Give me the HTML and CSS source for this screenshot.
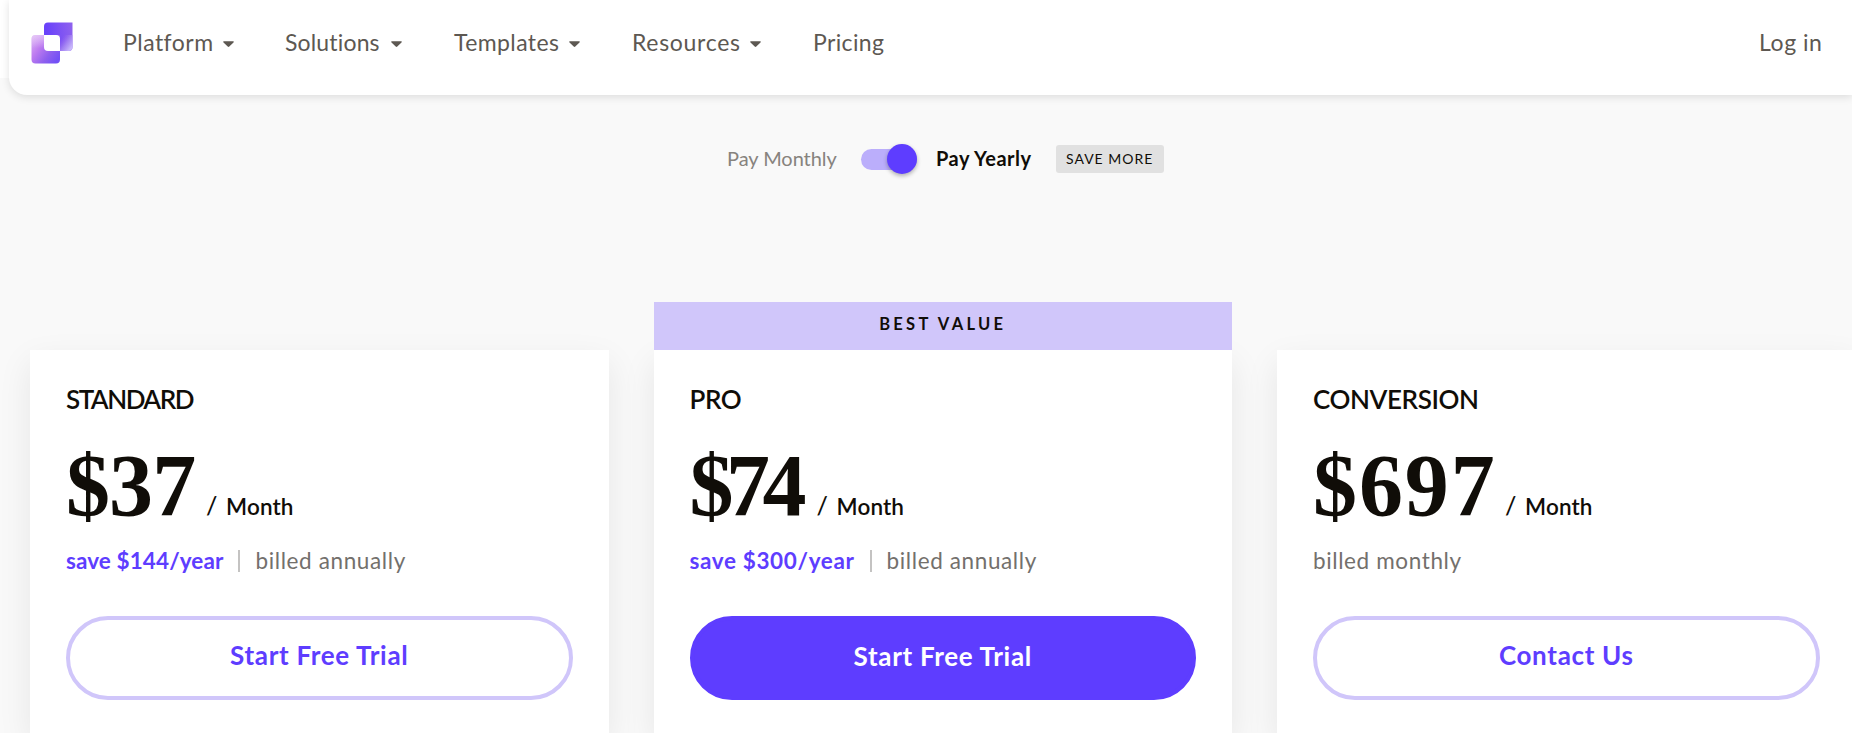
FILE: index.html
```
<!DOCTYPE html>
<html lang="en">
<head>
<meta charset="utf-8">
<title>Pricing</title>
<link rel="stylesheet" href="styles.css">
</head>
<body>
<header class="header">
  <a class="logo" aria-label="Home">
    <svg width="42" height="42" viewBox="0 0 42 42">
      <defs>
        <linearGradient id="top" x1="0" y1="0.2" x2="1" y2="0.1"><stop offset="0.1" stop-color="#6a42fa"/><stop offset="1" stop-color="#8f62ee"/></linearGradient>
        <linearGradient id="fold" x1="0" y1="0.35" x2="0.7" y2="1"><stop offset="0" stop-color="#9a6aee" stop-opacity="0"/><stop offset="0.5" stop-color="#a98af2" stop-opacity=".8"/><stop offset="1" stop-color="#c9b8fb"/></linearGradient>
        <linearGradient id="low" x1="0" y1="0" x2="1" y2="0.75"><stop offset="0" stop-color="#dfb8f6"/><stop offset="0.4" stop-color="#bd7bf0"/><stop offset="0.72" stop-color="#8f60ee"/><stop offset="1" stop-color="#7350f6"/></linearGradient>
        <linearGradient id="glow" x1="0" y1="0" x2="0" y2="1"><stop offset="0" stop-color="#ecd5f8" stop-opacity=".6"/><stop offset="1" stop-color="#ecd5f8" stop-opacity="0"/></linearGradient>
      </defs>
      <path d="M17 0.5H41.5V25a4 4 0 0 1-4 4H13V4.500a4 4 0 0 1 4-4z" fill="url(#top)"/>
      <path d="M29 13H41.500V25a4 4 0 0 1-4 4H29z" fill="url(#fold)"/>
      <path d="M4 13H29V37.500a4 4 0 0 1-4 4H4.500a4 4 0 0 1-4-4V17a4 4 0 0 1 4-4z" fill="url(#low)"/>
      <path d="M4.500 13H13V26H0.500V17a4 4 0 0 1 4-4z" fill="url(#glow)"/>
      <path d="M13 13H25a4 4 0 0 1 4 4V29H17a4 4 0 0 1-4-4z" fill="#fff"/>
    </svg>
  </a>
  <nav class="nav">
    <a class="nav-item platform">Platform<svg class="caret" width="11" height="6" viewBox="0 0 11 6"><path d="M1 .3h9c.8 0 1 .7.500 1.200L6.300 5.500c-.5.500-1.100.5-1.600 0L.5 1.500C0 1 .2.300 1 .300z"/></svg></a>
    <a class="nav-item solutions">Solutions<svg class="caret" width="11" height="6" viewBox="0 0 11 6"><path d="M1 .3h9c.8 0 1 .7.500 1.200L6.300 5.500c-.5.500-1.100.5-1.600 0L.5 1.500C0 1 .2.300 1 .300z"/></svg></a>
    <a class="nav-item templates">Templates<svg class="caret" width="11" height="6" viewBox="0 0 11 6"><path d="M1 .3h9c.8 0 1 .7.500 1.200L6.300 5.500c-.5.500-1.100.5-1.600 0L.5 1.500C0 1 .2.300 1 .300z"/></svg></a>
    <a class="nav-item resources">Resources<svg class="caret" width="11" height="6" viewBox="0 0 11 6"><path d="M1 .3h9c.8 0 1 .7.500 1.200L6.300 5.500c-.5.500-1.100.5-1.600 0L.5 1.500C0 1 .2.300 1 .300z"/></svg></a>
    <a class="nav-item pricing">Pricing</a>
  </nav>
  <a class="nav-item login">Log in</a>
</header>
<main class="page">
  <div class="billing">
    <span class="monthly">Pay Monthly</span>
    <span class="switch"><span class="knob"></span></span>
    <span class="yearly">Pay Yearly</span>
    <span class="badge">SAVE MORE</span>
  </div>
  <div class="plans">
    <section class="plan">
      <div class="card">
        <h2 class="name name-standard">STANDARD</h2>
        <div class="price"><span class="amount amount-standard">$37</span><span class="slash">/</span><span class="per">Month</span></div>
        <div class="terms"><span class="save">save $144/year</span><span class="bar"></span><span class="billed">billed annually</span></div>
        <a class="button">Start Free Trial</a>
      </div>
    </section>
    <section class="plan">
      <div class="ribbon">BEST VALUE</div>
      <div class="card">
        <h2 class="name">PRO</h2>
        <div class="price"><span class="amount amount-pro">$74</span><span class="slash">/</span><span class="per">Month</span></div>
        <div class="terms"><span class="save save-pro">save $300/year</span><span class="bar"></span><span class="billed">billed annually</span></div>
        <a class="button filled">Start Free Trial</a>
      </div>
    </section>
    <section class="plan">
      <div class="card">
        <h2 class="name">CONVERSION</h2>
        <div class="price"><span class="amount amount-conversion">$697</span><span class="slash">/</span><span class="per">Month</span></div>
        <div class="terms"><span class="billed">billed monthly</span></div>
        <a class="button">Contact Us</a>
      </div>
    </section>
  </div>
</main>
</body>
</html>
```
FILE: styles.css
```
* { box-sizing: border-box; }
body {
  margin: 0;
  height: 733px;
  overflow: hidden;
  background: linear-gradient(#fff 78px, #f9f9f9 78px);
  font-family: Lato, "Liberation Sans", sans-serif;
  color: #100d08;
}
.header {
  position: relative;
  display: flex;
  align-items: flex-start;
  height: 95px;
  margin-left: 9px;
  padding: 0 29.500px 0 21.500px;
  background: #fff;
  border-radius: 0 0 0 18px;
  box-shadow: 0 2px 8px rgba(0, 0, 0, .12);
}
.logo { display: block; width: 92.500px; padding-top: 21.500px; }
.logo svg { display: block; }
.nav { display: flex; flex: 1; }
.nav-item {
  display: flex;
  align-items: center;
  height: 83px;
  font-size: 23px;
  color: #5d5852;
}
.caret { margin: 5px 0 0 9.500px; fill: #5d5852; }
.platform { width: 162px; letter-spacing: .48px; }
.solutions { width: 169px; letter-spacing: .16px; }
.solutions .caret { margin-left: 11.500px; }
.templates { width: 178px; letter-spacing: .4px; }
.resources { width: 181px; letter-spacing: .69px; }
.pricing { letter-spacing: .36px; }
.login { letter-spacing: .54px; }

.billing {
  display: flex;
  align-items: center;
  height: 60px;
  margin: 34px 0 0 727px;
  font-size: 20px;
}
.monthly { width: 134px; padding-bottom: 3px; color: #87837e; letter-spacing: -.05px; }
.switch {
  display: flex;
  justify-content: flex-end;
  align-items: center;
  width: 56px;
  height: 21px;
  border-radius: 11px;
  background: #bbaefb;
}
.knob {
  flex: none;
  width: 30px;
  height: 30px;
  border-radius: 50%;
  background: #5e3dff;
  box-shadow: 0 2px 4px rgba(0, 0, 0, .3);
}
.yearly { width: 120px; margin-left: 19px; padding-bottom: 3px; font-weight: 700; letter-spacing: .5px; }
.badge {
  width: 108px;
  height: 28px;
  padding-left: 10px;
  border-radius: 3px;
  background: #e1e1e1;
  font-size: 14px;
  line-height: 28px;
  letter-spacing: 1px;
  white-space: nowrap;
}

.plans {
  display: grid;
  grid-template-columns: repeat(3, 578.500px);
  column-gap: 45px;
  align-items: end;
  margin: 113px 0 0 30px;
}
.ribbon {
  position: relative;
  height: 48px;
  background: #d0c6fa;
  font-size: 16.500px;
  font-weight: 700;
  line-height: 45px;
  letter-spacing: 3.300px;
  text-align: center;
}
.card {
  height: 383px;
  padding: 34px 36px 0;
  background: #fff;
  box-shadow: 0 12px 32px rgba(0, 0, 0, .08);
}
.name {
  margin: 0;
  font-size: 26px;
  font-weight: 600;
  line-height: 31px;
  letter-spacing: -.4px;
}
.name-standard { letter-spacing: -1.500px; }
.price {
  display: flex;
  align-items: baseline;
  height: 88px;
  margin-top: 27px;
  line-height: 88px;
  font-size: 22.500px;
}
.amount {
  font-family: "Liberation Serif", serif;
  font-size: 88px;
  font-weight: 700;
}
.amount-standard { width: 140px; letter-spacing: -.9px; }
.amount-pro { width: 127px; letter-spacing: -7.500px; }
.amount-conversion { width: 192px; letter-spacing: 1.900px; }
.slash { width: 20px; font-size: 25px; font-weight: 500; line-height: 1; }
.per { font-weight: 600; line-height: 1; letter-spacing: .15px; }
.terms {
  display: flex;
  align-items: center;
  height: 28px;
  margin-top: 17px;
  font-size: 22.500px;
  line-height: 28px;
}
.save { color: #5e3dff; font-weight: 700; letter-spacing: .1px; }
.save-pro { letter-spacing: .64px; }
.bar { width: 2px; height: 22px; margin: 0 15px; background: #c4c3c2; }
.billed { color: #73706c; letter-spacing: .62px; }
.button {
  display: block;
  height: 84px;
  margin-top: 41px;
  border: 4px solid #d0c6fa;
  border-radius: 42px;
  font-size: 26px;
  font-weight: 700;
  line-height: 70px;
  letter-spacing: .68px;
  text-align: center;
  color: #5e3dff;
}
.filled { border-color: #5e3dff; background: #5e3dff; color: #fff; line-height: 72px; }
```
